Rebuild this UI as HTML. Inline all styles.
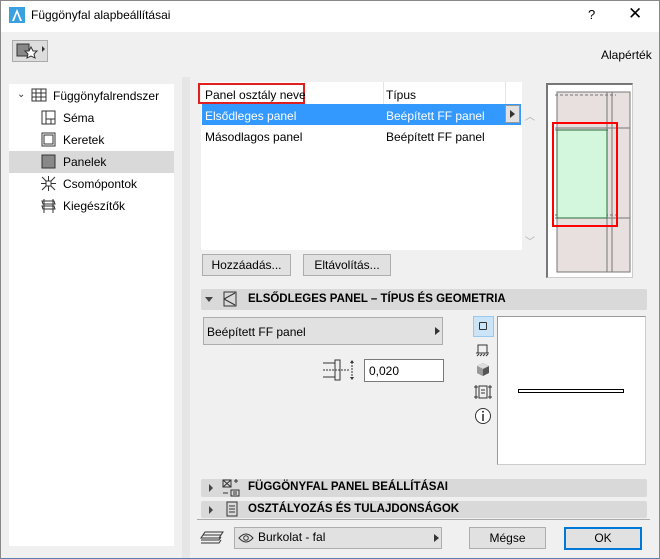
<!DOCTYPE html>
<html><head><style>
*{box-sizing:border-box;margin:0;padding:0}
body{width:660px;height:559px;background:#f0f0f0;font-family:"Liberation Sans",sans-serif;font-size:12px;color:#000;position:relative;overflow:hidden}
.a{position:absolute}
.btn{position:absolute;background:#e1e1e1;border:1px solid #adadad;text-align:center;line-height:20px;font-size:12px}
.hdr{position:absolute;left:201px;width:446px;background:#d9d9d9;font-weight:bold;font-size:11.5px;border-radius:2px}
.tri{position:absolute;width:0;height:0}
</style></head><body>
<div class="a" style="left:1px;top:1px;width:658px;height:31px;background:#fff"></div>
<svg class="a" style="left:9px;top:7px" width="16" height="16"><rect width="16" height="16" fill="#3aa0e0"/><path d="M3 14 L8 2 L13 14" fill="#fff"/><path d="M5 14 L8 6 L11 14Z" fill="#3aa0e0"/></svg>
<div class="a" style="left:31px;top:8px;font-size:12px">Függönyfal alapbeállításai</div>
<div class="a" style="left:588px;top:7px;font-size:13px">?</div>
<div class="a" style="left:628px;top:4px;font-size:17px">✕</div>
<div class="a" style="left:12px;top:40px;width:36px;height:22px;background:#ddd;border:1px solid #aaa"></div>
<svg class="a" style="left:15px;top:42px" width="32" height="18"><rect x="2" y="2" width="12" height="12" fill="#888" stroke="#333"/><path d="M16 5 l2 4 4 0 -3 3 1 4 -4-2 -4 2 1-4 -3-3 4 0z" fill="#fff" stroke="#333"/><path d="M27 4 l3 3 -3 3z" fill="#333"/></svg>
<div class="a" style="left:601px;top:48px">Alapérték</div>
<div class="a" style="left:9px;top:84px;width:165px;height:462px;background:#fff"></div>
<div class="a" style="left:9px;top:151px;width:165px;height:22px;background:#d9d9d9"></div>
<div class="a" style="left:182px;top:77px;width:8px;height:482px;background:#e6e6e6"></div>
<div class="a" style="left:17px;top:89px;font-size:10px;color:#333">⌄</div>
<svg class="a" style="left:31px;top:88px" width="16" height="14"><rect x="1" y="1" width="14" height="12" fill="none" stroke="#333"/><path d="M1 5H15M1 9H15M5 1V13M10 1V13" stroke="#333"/></svg>
<div class="a" style="left:53px;top:89px">Függönyfalrendszer</div>
<svg class="a" style="left:41px;top:110px" width="15" height="15"><rect x="1" y="1" width="13" height="13" fill="none" stroke="#333"/><path d="M5 1V14M5 9H14M10 9V14" stroke="#333"/></svg>
<div class="a" style="left:63px;top:111px">Séma</div>
<svg class="a" style="left:41px;top:132px" width="15" height="15"><rect x="1" y="1" width="13" height="13" fill="none" stroke="#333"/><rect x="3" y="3" width="9" height="9" fill="none" stroke="#333"/></svg>
<div class="a" style="left:63px;top:133px">Keretek</div>
<svg class="a" style="left:41px;top:154px" width="15" height="15"><rect x="1" y="1" width="13" height="13" fill="#888" stroke="#333"/></svg>
<div class="a" style="left:63px;top:155px">Panelek</div>
<svg class="a" style="left:41px;top:176px" width="15" height="15"><path d="M1 1L14 14M14 1L1 14M7.5 0V15M0 7.5H15" stroke="#333"/><rect x="5" y="5" width="5" height="5" fill="#fff" stroke="#333"/></svg>
<div class="a" style="left:63px;top:177px">Csomópontok</div>
<svg class="a" style="left:41px;top:198px" width="15" height="15"><path d="M1 3H13L14 6H2ZM1 8H13L14 11H2ZM3 1V15M12 1V15" fill="none" stroke="#333"/></svg>
<div class="a" style="left:63px;top:199px">Kiegészítők</div>
<div class="a" style="left:201px;top:82px;width:321px;height:168px;background:#fff"></div>
<div class="a" style="left:383px;top:82px;width:1px;height:22px;background:#e5e5e5"></div>
<div class="a" style="left:505px;top:82px;width:1px;height:22px;background:#e5e5e5"></div>
<div class="a" style="left:202px;top:104px;width:319px;height:21px;background:#3399ff"></div>
<div class="a" style="left:198px;top:83px;width:107px;height:21px;border:2px solid #e02020"></div>
<div class="a" style="left:205px;top:88px">Panel osztály neve</div>
<div class="a" style="left:386px;top:88px">Típus</div>
<div class="a" style="left:205px;top:109px;color:#fff">Elsődleges panel</div>
<div class="a" style="left:386px;top:109px;color:#fff">Beépített FF panel</div>
<div class="a" style="left:505px;top:105px;width:15px;height:18px;background:#e1e1e1;border:1px solid #999"></div>
<div class="tri" style="left:510px;top:110px;border-left:5px solid #333;border-top:4px solid transparent;border-bottom:4px solid transparent"></div>
<div class="a" style="left:205px;top:130px">Másodlagos panel</div>
<div class="a" style="left:386px;top:130px">Beépített FF panel</div>
<div class="a" style="left:525px;top:108px;color:#aaa;font-size:10px">︿</div>
<div class="a" style="left:525px;top:233px;color:#aaa;font-size:10px">﹀</div>
<div class="a" style="left:546px;top:83px;width:87px;height:195px;background:#fff;border:2px solid #777;border-right:1px solid #ccc;border-bottom:1px solid #ccc"></div>
<svg class="a" style="left:546px;top:83px" width="87" height="195">
<rect x="11" y="9" width="73" height="180" fill="#e8dfdf" stroke="#777"/>
<path d="M61 9V189M66 9V189M9 45H84M9 135H84" stroke="#777"/>
<path d="M9 12H70M9 47H62M9 132H70" stroke="#777" stroke-dasharray="3,2"/>
<rect x="11" y="47" width="50" height="88" fill="#d3f7dd" stroke="#2a6a3a"/>
<rect x="7" y="40" width="64" height="103" fill="none" stroke="#f00" stroke-width="2"/>
</svg>
<div class="btn" style="left:202px;top:254px;width:89px;height:22px">Hozzáadás...</div>
<div class="btn" style="left:303px;top:254px;width:88px;height:22px">Eltávolítás...</div>
<div class="hdr" style="top:289px;height:21px"></div>
<div class="tri" style="left:205px;top:297px;border-top:5px solid #444;border-left:4px solid transparent;border-right:4px solid transparent"></div>
<svg class="a" style="left:223px;top:291px" width="14" height="16"><rect x="1" y="1" width="12" height="14" fill="none" stroke="#333"/><path d="M1 8L12 2M1 8L12 14" stroke="#333" fill="none"/></svg>
<div class="a" style="left:248px;top:293px;font-weight:bold;font-size:11.5px">ELSŐDLEGES PANEL – TÍPUS ÉS GEOMETRIA</div>
<div class="a" style="left:203px;top:317px;width:240px;height:28px;background:#e1e1e1;border:1px solid #adadad"></div>
<div class="a" style="left:207px;top:325px">Beépített FF panel</div>
<div class="tri" style="left:435px;top:327px;border-left:5px solid #333;border-top:4px solid transparent;border-bottom:4px solid transparent"></div>
<svg class="a" style="left:322px;top:359px" width="36" height="22"><path d="M1 4H13V18H1M13 4V1H18V21H13V18" fill="none" stroke="#333"/><path d="M1 11H28" stroke="#333" stroke-dasharray="2,1"/><path d="M30 3V19" stroke="#333" stroke-dasharray="2,1"/><path d="M30 1l-2 3h4zM30 21l-2-3h4z" fill="#333"/></svg>
<div class="a" style="left:364px;top:359px;width:80px;height:23px;background:#fff;border:1px solid #7a7a7a;padding:4px 4px">0,020</div>
<div class="a" style="left:473px;top:316px;width:21px;height:21px;background:#cce4f7;border:1px solid #99c9ef"></div>
<div class="a" style="left:479px;top:322px;width:8px;height:8px;border:1px solid #333;border-radius:1px"></div>
<svg class="a" style="left:475px;top:342px" width="16" height="16"><path d="M3 11V3H12V11M1 11H14" fill="none" stroke="#333"/><path d="M2 14l2-2M5 14l2-2M8 14l2-2M11 14l2-2" stroke="#333"/></svg>
<svg class="a" style="left:476px;top:362px" width="14" height="15"><path d="M7 1L13 4V11L7 14L1 11V4Z" fill="#555"/><path d="M1 4L7 7L13 4L7 1Z" fill="#ddd"/><path d="M7 7V14L1 11V4Z" fill="#999"/></svg>
<svg class="a" style="left:474px;top:384px" width="18" height="16"><path d="M2 1V15M16 1V15M5 2H13V14H5ZM7 6H11M7 9H11M0 3H4M0 13H4M14 3H18M14 13H18" fill="none" stroke="#333"/></svg>
<svg class="a" style="left:474px;top:407px" width="18" height="18"><circle cx="9" cy="9" r="7.5" fill="#fff" stroke="#333"/><path d="M9 7V14" stroke="#333" stroke-width="1.6"/><circle cx="9" cy="4.8" r="1" fill="#333"/></svg>
<div class="a" style="left:497px;top:316px;width:149px;height:149px;background:#fff;border:1px solid #999;border-right-color:#ccc;border-bottom-color:#ccc"></div>
<div class="a" style="left:518px;top:389px;width:106px;height:4px;border:1px solid #000;background:#fff"></div>
<div class="hdr" style="top:479px;height:18px"></div>
<div class="tri" style="left:209px;top:484px;border-left:4px solid #444;border-top:4px solid transparent;border-bottom:4px solid transparent"></div>
<svg class="a" style="left:222px;top:479px" width="18" height="18"><rect x="1" y="1" width="8" height="7" fill="none" stroke="#333"/><path d="M1 1L9 8M9 1L1 8M12 2H16M14 0V4M9 11H17V17H9ZM11 13H15M11 15H15M1 14H6" stroke="#333" fill="none"/></svg>
<div class="a" style="left:248px;top:481px;font-weight:bold;font-size:11.5px">FÜGGÖNYFAL PANEL BEÁLLÍTÁSAI</div>
<div class="hdr" style="top:501px;height:17px"></div>
<div class="tri" style="left:209px;top:506px;border-left:4px solid #444;border-top:4px solid transparent;border-bottom:4px solid transparent"></div>
<svg class="a" style="left:226px;top:501px" width="12" height="16"><rect x="1" y="1" width="10" height="14" fill="none" stroke="#333"/><path d="M3 5H9M3 8H9M3 11H9" stroke="#333"/></svg>
<div class="a" style="left:248px;top:503px;font-weight:bold;font-size:11.5px">OSZTÁLYOZÁS ÉS TULAJDONSÁGOK</div>
<div class="a" style="left:197px;top:519px;width:453px;height:1px;background:#aaa"></div>
<svg class="a" style="left:199px;top:530px" width="26" height="16"><path d="M6 2H24L20 8H2ZM4 5H22M2 10H20L22 7M2 13H20L22 10" fill="none" stroke="#333"/></svg>
<div class="a" style="left:234px;top:527px;width:208px;height:22px;background:#e1e1e1;border:1px solid #adadad"></div>
<svg class="a" style="left:238px;top:532px" width="16" height="12"><path d="M1 6Q8 -2 15 6Q8 14 1 6Z" fill="none" stroke="#333"/><circle cx="8" cy="6" r="2.3" fill="none" stroke="#333"/></svg>
<div class="a" style="left:258px;top:530px">Burkolat - fal</div>
<div class="tri" style="left:434px;top:534px;border-left:5px solid #333;border-top:4px solid transparent;border-bottom:4px solid transparent"></div>
<div class="btn" style="left:469px;top:527px;width:77px;height:22px">Mégse</div>
<div class="btn" style="left:564px;top:527px;width:78px;height:23px;border:2px solid #0078d7;line-height:19px">OK</div>
<div class="a" style="left:0;top:0;width:660px;height:559px;border:1px solid #888;border-bottom-color:#5a7fa8"></div>
</body></html>
